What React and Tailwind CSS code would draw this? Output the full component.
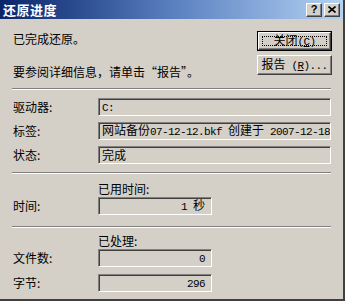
import React from "react";

const cjk = { fontFamily: '"Noto Sans CJK SC", "Liberation Sans", sans-serif' };

function Ascii({ children }) {
  return (
    <span className="font-['Liberation_Mono',monospace] text-[11px] tracking-[-0.6px]">
      {children}
    </span>
  );
}

function Field({ children, right, className = "" }) {
  return (
    <div
      className={
        "h-[18px] flex items-center border border-[#808080] border-b-white border-r-white shadow-[inset_1px_1px_0_#404040] text-[12px] leading-none text-black whitespace-pre overflow-hidden " +
        (right ? "justify-end pr-[6px] " : "pl-[3px] ") +
        className
      }
    >
      <span>{children}</span>
    </div>
  );
}

function Separator() {
  return <div className="ml-[12px] mr-[12px] h-[2px] border-t border-[#808080] border-b border-b-white" />;
}

function WinButton({ children, isDefault }) {
  const label = <span className="whitespace-pre">{children}</span>;
  const inner = (
    <div className="h-full w-full flex items-center justify-center border border-white border-b-[#404040] border-r-[#404040] shadow-[inset_-1px_-1px_0_#808080] text-[12px] leading-none">
      {isDefault ? (
        <div className="flex items-center justify-center w-[calc(100%-6px)] h-[calc(100%-6px)] border border-dotted border-black">
          {label}
        </div>
      ) : (
        label
      )}
    </div>
  );
  return (
    <div
      className={
        "w-[75px] h-[20px] bg-[#d4d0c8] " + (isDefault ? "border border-black" : "")
      }
    >
      {inner}
    </div>
  );
}

function CaptionButton({ children }) {
  return (
    <div className="w-[16px] h-[14px] bg-[#d4d0c8] border border-white border-b-[#404040] border-r-[#404040] shadow-[inset_-1px_-1px_0_#808080] flex items-center justify-center text-black">
      {children}
    </div>
  );
}

export default function App() {
  return (
    <div
      style={cjk}
      className="w-[345px] h-[301px] bg-[#d4d0c8] border-r-2 border-b-2 border-r-[#404040] border-b-[#404040] flex flex-col text-black"
    >
      <div className="h-[19px] flex items-center justify-between pl-[3px] pr-[3px] bg-gradient-to-r from-[#0a246a] via-[#5a7fbf] to-[#b4d2f2]">
        <span className="text-white font-bold text-[13px] leading-none tracking-[0.5px]">还原进度</span>
        <div className="flex gap-[2px]">
          <CaptionButton>
            <span className="font-['Liberation_Sans',sans-serif] font-bold text-[11px] leading-none">?</span>
          </CaptionButton>
          <CaptionButton>
            <svg width="8" height="7" viewBox="0 0 8 7">
              <path d="M0.5 0.5L7.5 6.5M7.5 0.5L0.5 6.5" stroke="black" strokeWidth="1.6" />
            </svg>
          </CaptionButton>
        </div>
      </div>

      <div className="flex justify-between pl-[13px] pr-[11px] mt-[12px]">
        <div className="flex flex-col text-[12px] leading-[16px]">
          <div>已完成还原。</div>
          <div className="mt-[17px]">要参阅详细信息，请单击“报告”。</div>
        </div>
        <div className="flex flex-col gap-[4px]">
          <WinButton isDefault>
            关闭<Ascii>(<span className="underline">C</span>)</Ascii>
          </WinButton>
          <WinButton>
            报告<Ascii>{" ("}<span className="underline">R</span>)...</Ascii>
          </WinButton>
        </div>
      </div>

      <div className="mt-[8px]">
        <Separator />
      </div>

      <div className="flex flex-col gap-[6px] mt-[8px] pl-[13px] pr-[12px] text-[12px]">
        <div className="flex items-center">
          <div className="w-[85px]">驱动器:</div>
          <Field className="flex-1">
            <Ascii>C:</Ascii>
          </Field>
        </div>
        <div className="flex items-center">
          <div className="w-[85px]">标签:</div>
          <Field className="flex-1">
            网站备份<Ascii>{"07-12-12.bkf "}</Ascii>创建于<Ascii>{" 2007-12-18"}</Ascii>
          </Field>
        </div>
        <div className="flex items-center">
          <div className="w-[85px]">状态:</div>
          <Field className="flex-1">完成</Field>
        </div>
      </div>

      <div className="mt-[8px]">
        <Separator />
      </div>

      <div className="pl-[13px] text-[12px]">
        <div className="ml-[85px] mt-[7px] leading-[16px]">已用时间:</div>
        <div className="flex items-center">
          <div className="w-[85px]">时间:</div>
          <Field right className="w-[114px]">
            <Ascii>{"1 "}</Ascii>秒
          </Field>
        </div>
      </div>

      <div className="mt-[11px]">
        <Separator />
      </div>

      <div className="pl-[13px] text-[12px]">
        <div className="ml-[85px] mt-[5px] leading-[16px]">已处理:</div>
        <div className="flex flex-col gap-[7px]">
          <div className="flex items-center">
            <div className="w-[85px]">文件数:</div>
            <Field right className="w-[114px]">
              <Ascii>0</Ascii>
            </Field>
          </div>
          <div className="flex items-center">
            <div className="w-[85px]">字节:</div>
            <Field right className="w-[114px]">
              <Ascii>296</Ascii>
            </Field>
          </div>
        </div>
      </div>
    </div>
  );
}
